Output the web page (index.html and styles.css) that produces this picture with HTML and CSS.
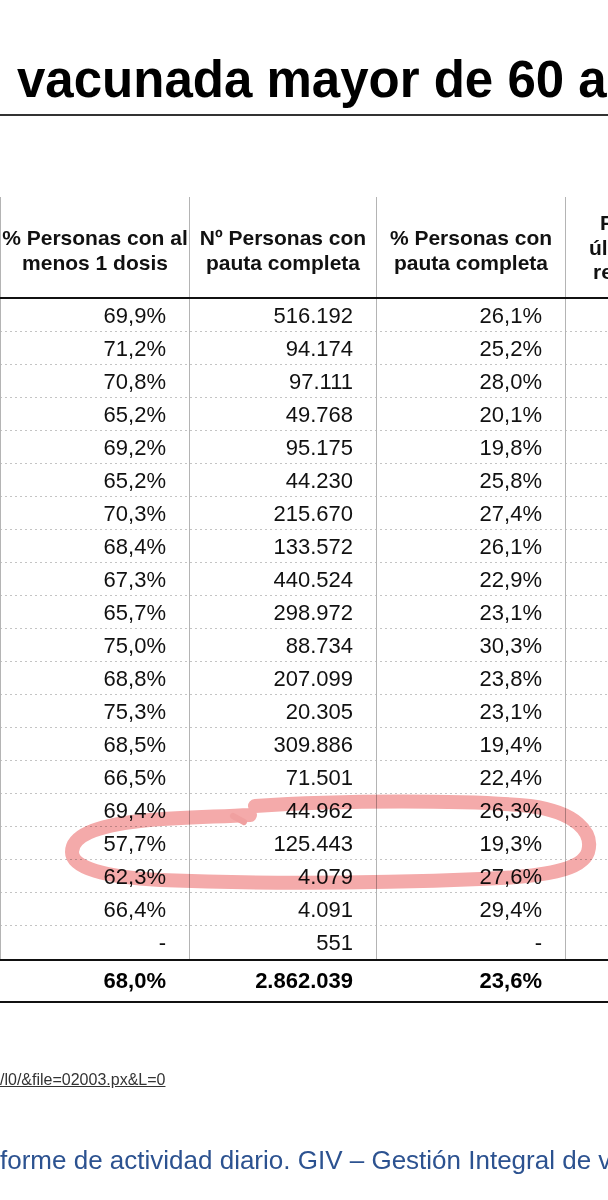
FILE: index.html
```html
<!DOCTYPE html>
<html lang="es">
<head>
<meta charset="utf-8">
<title>Población vacunada mayor de 60 años</title>
<link rel="stylesheet" href="styles.css">
</head>
<body>
<div class="page">
  <h1 class="title">vacunada mayor de 60 años</h1>

  <div class="table">
    <div class="row head">
      <div class="cell">% Personas con al<br>menos 1 dosis</div>
      <div class="cell">Nº Personas con<br>pauta completa</div>
      <div class="cell">% Personas con<br>pauta completa</div>
      <div class="cell last-head">
        <span class="l1">Fecha de la</span>
        <span class="l2">última vacuna</span>
        <span class="l3">registrada</span>
      </div>
    </div>

    <div class="row data"><div class="cell">69,9%</div><div class="cell">516.192</div><div class="cell">26,1%</div><div class="cell"></div></div>
    <div class="row data"><div class="cell">71,2%</div><div class="cell">94.174</div><div class="cell">25,2%</div><div class="cell"></div></div>
    <div class="row data"><div class="cell">70,8%</div><div class="cell">97.111</div><div class="cell">28,0%</div><div class="cell"></div></div>
    <div class="row data"><div class="cell">65,2%</div><div class="cell">49.768</div><div class="cell">20,1%</div><div class="cell"></div></div>
    <div class="row data"><div class="cell">69,2%</div><div class="cell">95.175</div><div class="cell">19,8%</div><div class="cell"></div></div>
    <div class="row data"><div class="cell">65,2%</div><div class="cell">44.230</div><div class="cell">25,8%</div><div class="cell"></div></div>
    <div class="row data"><div class="cell">70,3%</div><div class="cell">215.670</div><div class="cell">27,4%</div><div class="cell"></div></div>
    <div class="row data"><div class="cell">68,4%</div><div class="cell">133.572</div><div class="cell">26,1%</div><div class="cell"></div></div>
    <div class="row data"><div class="cell">67,3%</div><div class="cell">440.524</div><div class="cell">22,9%</div><div class="cell"></div></div>
    <div class="row data"><div class="cell">65,7%</div><div class="cell">298.972</div><div class="cell">23,1%</div><div class="cell"></div></div>
    <div class="row data"><div class="cell">75,0%</div><div class="cell">88.734</div><div class="cell">30,3%</div><div class="cell"></div></div>
    <div class="row data"><div class="cell">68,8%</div><div class="cell">207.099</div><div class="cell">23,8%</div><div class="cell"></div></div>
    <div class="row data"><div class="cell">75,3%</div><div class="cell">20.305</div><div class="cell">23,1%</div><div class="cell"></div></div>
    <div class="row data"><div class="cell">68,5%</div><div class="cell">309.886</div><div class="cell">19,4%</div><div class="cell"></div></div>
    <div class="row data"><div class="cell">66,5%</div><div class="cell">71.501</div><div class="cell">22,4%</div><div class="cell"></div></div>
    <div class="row data"><div class="cell">69,4%</div><div class="cell">44.962</div><div class="cell">26,3%</div><div class="cell"></div></div>
    <div class="row data"><div class="cell">57,7%</div><div class="cell">125.443</div><div class="cell">19,3%</div><div class="cell"></div></div>
    <div class="row data"><div class="cell">62,3%</div><div class="cell">4.079</div><div class="cell">27,6%</div><div class="cell"></div></div>
    <div class="row data"><div class="cell">66,4%</div><div class="cell">4.091</div><div class="cell">29,4%</div><div class="cell"></div></div>
    <div class="row data end"><div class="cell">-</div><div class="cell">551</div><div class="cell">-</div><div class="cell"></div></div>

    <div class="row total"><div class="cell">68,0%</div><div class="cell">2.862.039</div><div class="cell">23,6%</div><div class="cell"></div></div>
  </div>

  <p class="source"><a href="#">/l0/&amp;file=02003.px&amp;L=0</a></p>

  <p class="footer">forme de actividad diario. GIV – Gestión Integral de vacunación</p>

  <svg class="marker" width="608" height="1200" viewBox="0 0 608 1200" aria-hidden="true">
    <path class="ring" d="M 255 806 C 340 800, 470 800, 530 806 C 575 812, 594 832, 588 852 C 582 870, 545 877, 480 879 C 380 883, 260 884, 160 880 C 105 877, 72 868, 72 852 C 72 836, 95 826, 140 821 C 180 817, 215 817, 250 815"/>
    <path class="dash" d="M 233 816 L 244 822"/>
  </svg>
</div>
</body>
</html>
```

FILE: styles.css
```css
html, body {
  margin: 0;
  padding: 0;
  background: #fff;
}

body {
  width: 608px;
  height: 1200px;
  overflow: hidden;
  font-family: "Liberation Sans", Arial, sans-serif;
  color: #111;
}

.page {
  position: relative;
  width: 608px;
  height: 1200px;
  overflow: hidden;
}

.title {
  margin: 0;
  padding: 51px 0 5px 17px;
  font-size: 51px;
  line-height: 58px;
  font-weight: bold;
  white-space: nowrap;
  color: #000;
  border-bottom: 2px solid #333;
}

.table {
  margin-top: 81px;
  width: 754px;
}

.row {
  display: grid;
  grid-template-columns: 189px 187px 189px 189px;
}

.cell {
  box-sizing: border-box;
  border-left: 1px solid #b4b4b4;
}

.head {
  height: 102px;
  border-bottom: 2px solid #111;
  box-sizing: border-box;
}

.head .cell {
  display: flex;
  align-items: center;
  justify-content: center;
  text-align: center;
  padding-top: 6px;
  font-size: 21px;
  line-height: 25px;
  font-weight: bold;
  white-space: nowrap;
}

.head .last-head {
  display: flex;
  flex-direction: column;
  align-items: flex-start;
  justify-content: center;
  text-align: left;
  padding-top: 2px;
  line-height: 24.5px;
}

.last-head .l1 { margin-left: 34px; }
.last-head .l2 { margin-left: 23px; }
.last-head .l3 { margin-left: 27px; }

.data {
  height: 33px;
  background-image: linear-gradient(to right, #c4c4c4 0 2px, transparent 2px 5px);
  background-size: 5px 1px;
  background-repeat: repeat-x;
  background-position: 0 100%;
}

.data.end {
  background-image: none;
}

.data .cell,
.total .cell {
  display: flex;
  align-items: center;
  justify-content: flex-end;
  padding-right: 23px;
  font-size: 22px;
  white-space: nowrap;
}

.total {
  height: 44px;
  box-sizing: border-box;
  border-top: 2px solid #111;
  border-bottom: 2px solid #111;
}

.total .cell {
  border-left: none;
  font-weight: bold;
  color: #000;
}

.source {
  margin: 68px 0 0 0;
  font-size: 16px;
  line-height: 18px;
  white-space: nowrap;
}

.source a {
  color: #333;
  text-decoration: underline;
}

.footer {
  margin: 56px 0 0 0;
  font-size: 26px;
  line-height: 30px;
  color: #2c5290;
  white-space: nowrap;
}

.marker {
  position: absolute;
  left: 0;
  top: 0;
  pointer-events: none;
  mix-blend-mode: multiply;
}

.ring {
  fill: none;
  stroke: #f4aaaa;
  stroke-width: 14;
  stroke-linecap: round;
  stroke-linejoin: round;
}

.dash {
  fill: none;
  stroke: #f0a0a0;
  stroke-width: 6;
  stroke-linecap: round;
}
```
